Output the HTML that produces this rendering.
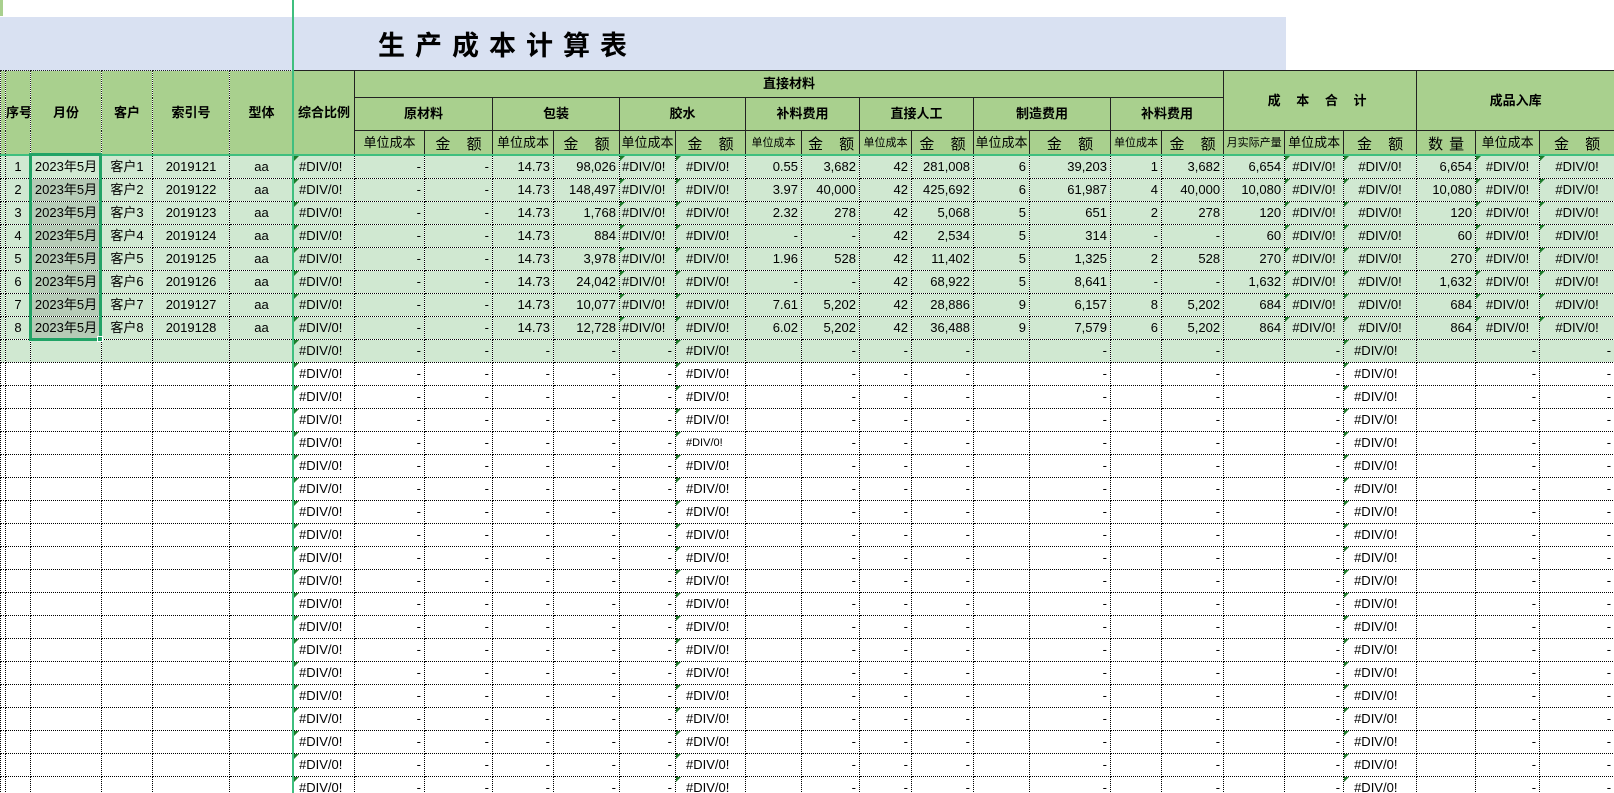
<!DOCTYPE html>
<html><head><meta charset="utf-8">
<style>
*{margin:0;padding:0;box-sizing:border-box}
html{width:1614px;height:793px;overflow:hidden}
body{width:1614px;height:793px;overflow:hidden;background:#fff;position:relative;font-family:"Liberation Sans","Noto Sans CJK SC",sans-serif;font-size:13px;color:#000}
#wrap{position:absolute;left:0;top:0;width:1614px;height:793px;overflow:hidden}
#mark{position:absolute;left:0;top:0;width:3px;height:16px;background:#a9d08e}
#band{position:absolute;left:0;top:17px;width:1286px;height:54px;background:#d9e1f2}
#title{position:absolute;left:378px;top:24px;font-size:27px;font-weight:bold;letter-spacing:10px;line-height:40px;font-family:"Noto Sans CJK SC","WenQuanYi Zen Hei",sans-serif}
table{position:absolute;left:0;top:70px;width:1614px;border-collapse:collapse;table-layout:fixed}
td{border:1px dotted #000;height:23px;text-align:right;padding:0 3px;white-space:nowrap;overflow:hidden;line-height:20px;position:relative}
thead td{background:#a9d08e;text-align:center;padding:0;border:1px solid #222;font-size:13px}
thead td.d{border-style:dotted}
thead td.b{font-weight:bold}
thead .sm{font-size:11px}
thead .je{font-size:15px;letter-spacing:6px;padding-left:6px;padding-top:4px}
tr.g td{background:#d0e8d1}
td.c{text-align:center}
td.l{text-align:left;padding-left:10px}
td.l5{text-align:left;padding-left:5px}
td.l2{text-align:left;padding-left:2px}
td.s{background:#b6cbb6!important}
td.t::before{content:"";position:absolute;left:0;top:0;border-top:5px solid #1e7b2a;border-right:5px solid transparent}
#vline{position:absolute;left:292px;top:0;width:2px;height:793px;background:#3fbf7f}
#hline{position:absolute;left:0;top:154px;width:1614px;height:2px;background:#3fbf7f}
#sel{position:absolute;left:29px;top:153px;width:73px;height:188px;border:3px solid #21a366}
#hd{position:absolute;left:97px;top:336px;width:6px;height:6px;background:#21a366;border:1px solid #fff}
</style></head><body><div id="wrap">
<div id="mark"></div>
<div id="band"></div>
<div id="title">生产成本计算表</div>
<table>
<colgroup><col style="width:5px"><col style="width:25px"><col style="width:71px"><col style="width:51px"><col style="width:77px"><col style="width:64px"><col style="width:61px"><col style="width:70px"><col style="width:68px"><col style="width:61px"><col style="width:66px"><col style="width:56px"><col style="width:70px"><col style="width:56px"><col style="width:58px"><col style="width:52px"><col style="width:62px"><col style="width:56px"><col style="width:81px"><col style="width:51px"><col style="width:62px"><col style="width:61px"><col style="width:59px"><col style="width:73px"><col style="width:59px"><col style="width:64px"><col style="width:75px"></colgroup>
<thead>
<tr style="height:27px"><td class="d" rowspan="3"></td><td class="d b" rowspan="3">序号</td><td class="d b" rowspan="3">月份</td><td class="d b" rowspan="3">客户</td><td class="d b" rowspan="3">索引号</td><td class="d b" rowspan="3">型体</td><td class="b" rowspan="3">综合比例</td><td class="b" colspan="14">直接材料</td><td class="b" colspan="3" rowspan="2" style="letter-spacing:6px">成 本 合 计</td><td class="b" colspan="3" rowspan="2">成品入库</td></tr>
<tr style="height:33px"><td class="b" colspan="2">原材料</td><td class="b" colspan="2">包装</td><td class="b" colspan="2">胶水</td><td class="b" colspan="2">补料费用</td><td class="b" colspan="2">直接人工</td><td class="b" colspan="2">制造费用</td><td class="b" colspan="2">补料费用</td></tr>
<tr style="height:25px"><td>单位成本</td><td class="je">金 额</td><td>单位成本</td><td class="je">金 额</td><td>单位成本</td><td class="je">金 额</td><td class="sm">单位成本</td><td class="je">金 额</td><td class="sm">单位成本</td><td class="je">金 额</td><td>单位成本</td><td class="je">金 额</td><td class="sm">单位成本</td><td class="je">金 额</td><td class="sm">月实际产量</td><td>单位成本</td><td class="je">金 额</td><td class="je">数量</td><td>单位成本</td><td class="je">金 额</td></tr>
</thead>
<tbody>
<tr class="g"><td></td><td class="c">1</td><td class="c" style="background:#d0e8d1">2023年5月</td><td class="c">客户1</td><td class="c">2019121</td><td class="c">aa</td><td class="l5 t">#DIV/0!</td><td>-</td><td>-</td><td>14.73</td><td>98,026</td><td class="l2 t">#DIV/0!</td><td class="l t">#DIV/0!</td><td>0.55</td><td>3,682</td><td>42</td><td>281,008</td><td>6</td><td>39,203</td><td>1</td><td>3,682</td><td>6,654</td><td class="c t">#DIV/0!</td><td class="c t">#DIV/0!</td><td>6,654</td><td class="c t">#DIV/0!</td><td class="c t">#DIV/0!</td></tr>
<tr class="g"><td></td><td class="c">2</td><td class="c s">2023年5月</td><td class="c">客户2</td><td class="c">2019122</td><td class="c">aa</td><td class="l5 t">#DIV/0!</td><td>-</td><td>-</td><td>14.73</td><td>148,497</td><td class="l2 t">#DIV/0!</td><td class="l t">#DIV/0!</td><td>3.97</td><td>40,000</td><td>42</td><td>425,692</td><td>6</td><td>61,987</td><td>4</td><td>40,000</td><td>10,080</td><td class="c t">#DIV/0!</td><td class="c t">#DIV/0!</td><td>10,080</td><td class="c t">#DIV/0!</td><td class="c t">#DIV/0!</td></tr>
<tr class="g"><td></td><td class="c">3</td><td class="c s">2023年5月</td><td class="c">客户3</td><td class="c">2019123</td><td class="c">aa</td><td class="l5 t">#DIV/0!</td><td>-</td><td>-</td><td>14.73</td><td>1,768</td><td class="l2 t">#DIV/0!</td><td class="l t">#DIV/0!</td><td>2.32</td><td>278</td><td>42</td><td>5,068</td><td>5</td><td>651</td><td>2</td><td>278</td><td>120</td><td class="c t">#DIV/0!</td><td class="c t">#DIV/0!</td><td>120</td><td class="c t">#DIV/0!</td><td class="c t">#DIV/0!</td></tr>
<tr class="g"><td></td><td class="c">4</td><td class="c s">2023年5月</td><td class="c">客户4</td><td class="c">2019124</td><td class="c">aa</td><td class="l5 t">#DIV/0!</td><td>-</td><td>-</td><td>14.73</td><td>884</td><td class="l2 t">#DIV/0!</td><td class="l t">#DIV/0!</td><td>-</td><td>-</td><td>42</td><td>2,534</td><td>5</td><td>314</td><td>-</td><td>-</td><td>60</td><td class="c t">#DIV/0!</td><td class="c t">#DIV/0!</td><td>60</td><td class="c t">#DIV/0!</td><td class="c t">#DIV/0!</td></tr>
<tr class="g"><td></td><td class="c">5</td><td class="c s">2023年5月</td><td class="c">客户5</td><td class="c">2019125</td><td class="c">aa</td><td class="l5 t">#DIV/0!</td><td>-</td><td>-</td><td>14.73</td><td>3,978</td><td class="l2 t">#DIV/0!</td><td class="l t">#DIV/0!</td><td>1.96</td><td>528</td><td>42</td><td>11,402</td><td>5</td><td>1,325</td><td>2</td><td>528</td><td>270</td><td class="c t">#DIV/0!</td><td class="c t">#DIV/0!</td><td>270</td><td class="c t">#DIV/0!</td><td class="c t">#DIV/0!</td></tr>
<tr class="g"><td></td><td class="c">6</td><td class="c s">2023年5月</td><td class="c">客户6</td><td class="c">2019126</td><td class="c">aa</td><td class="l5 t">#DIV/0!</td><td>-</td><td>-</td><td>14.73</td><td>24,042</td><td class="l2 t">#DIV/0!</td><td class="l t">#DIV/0!</td><td>-</td><td>-</td><td>42</td><td>68,922</td><td>5</td><td>8,641</td><td>-</td><td>-</td><td>1,632</td><td class="c t">#DIV/0!</td><td class="c t">#DIV/0!</td><td>1,632</td><td class="c t">#DIV/0!</td><td class="c t">#DIV/0!</td></tr>
<tr class="g"><td></td><td class="c">7</td><td class="c s">2023年5月</td><td class="c">客户7</td><td class="c">2019127</td><td class="c">aa</td><td class="l5 t">#DIV/0!</td><td>-</td><td>-</td><td>14.73</td><td>10,077</td><td class="l2 t">#DIV/0!</td><td class="l t">#DIV/0!</td><td>7.61</td><td>5,202</td><td>42</td><td>28,886</td><td>9</td><td>6,157</td><td>8</td><td>5,202</td><td>684</td><td class="c t">#DIV/0!</td><td class="c t">#DIV/0!</td><td>684</td><td class="c t">#DIV/0!</td><td class="c t">#DIV/0!</td></tr>
<tr class="g"><td></td><td class="c">8</td><td class="c s">2023年5月</td><td class="c">客户8</td><td class="c">2019128</td><td class="c">aa</td><td class="l5 t">#DIV/0!</td><td>-</td><td>-</td><td>14.73</td><td>12,728</td><td class="l2 t">#DIV/0!</td><td class="l t">#DIV/0!</td><td>6.02</td><td>5,202</td><td>42</td><td>36,488</td><td>9</td><td>7,579</td><td>6</td><td>5,202</td><td>864</td><td class="c t">#DIV/0!</td><td class="c t">#DIV/0!</td><td>864</td><td class="c t">#DIV/0!</td><td class="c t">#DIV/0!</td></tr>
<tr class="g"><td></td><td></td><td></td><td></td><td></td><td></td><td class="l5 t">#DIV/0!</td><td>-</td><td>-</td><td>-</td><td>-</td><td>-</td><td class="l t">#DIV/0!</td><td></td><td>-</td><td>-</td><td>-</td><td></td><td>-</td><td></td><td>-</td><td></td><td>-</td><td class="l t">#DIV/0!</td><td></td><td>-</td><td>-</td></tr>
<tr><td></td><td></td><td></td><td></td><td></td><td></td><td class="l5 t">#DIV/0!</td><td>-</td><td>-</td><td>-</td><td>-</td><td>-</td><td class="l t">#DIV/0!</td><td></td><td>-</td><td>-</td><td>-</td><td></td><td>-</td><td></td><td>-</td><td></td><td>-</td><td class="l t">#DIV/0!</td><td></td><td>-</td><td>-</td></tr>
<tr><td></td><td></td><td></td><td></td><td></td><td></td><td class="l5 t">#DIV/0!</td><td>-</td><td>-</td><td>-</td><td>-</td><td>-</td><td class="l t">#DIV/0!</td><td></td><td>-</td><td>-</td><td>-</td><td></td><td>-</td><td></td><td>-</td><td></td><td>-</td><td class="l t">#DIV/0!</td><td></td><td>-</td><td>-</td></tr>
<tr><td></td><td></td><td></td><td></td><td></td><td></td><td class="l5 t">#DIV/0!</td><td>-</td><td>-</td><td>-</td><td>-</td><td>-</td><td class="l t">#DIV/0!</td><td></td><td>-</td><td>-</td><td>-</td><td></td><td>-</td><td></td><td>-</td><td></td><td>-</td><td class="l t">#DIV/0!</td><td></td><td>-</td><td>-</td></tr>
<tr><td></td><td></td><td></td><td></td><td></td><td></td><td class="l5 t">#DIV/0!</td><td>-</td><td>-</td><td>-</td><td>-</td><td>-</td><td class="l t" style="font-size:11px">#DIV/0!</td><td></td><td>-</td><td>-</td><td>-</td><td></td><td>-</td><td></td><td>-</td><td></td><td>-</td><td class="l t">#DIV/0!</td><td></td><td>-</td><td>-</td></tr>
<tr><td></td><td></td><td></td><td></td><td></td><td></td><td class="l5 t">#DIV/0!</td><td>-</td><td>-</td><td>-</td><td>-</td><td>-</td><td class="l t">#DIV/0!</td><td></td><td>-</td><td>-</td><td>-</td><td></td><td>-</td><td></td><td>-</td><td></td><td>-</td><td class="l t">#DIV/0!</td><td></td><td>-</td><td>-</td></tr>
<tr><td></td><td></td><td></td><td></td><td></td><td></td><td class="l5 t">#DIV/0!</td><td>-</td><td>-</td><td>-</td><td>-</td><td>-</td><td class="l t">#DIV/0!</td><td></td><td>-</td><td>-</td><td>-</td><td></td><td>-</td><td></td><td>-</td><td></td><td>-</td><td class="l t">#DIV/0!</td><td></td><td>-</td><td>-</td></tr>
<tr><td></td><td></td><td></td><td></td><td></td><td></td><td class="l5 t">#DIV/0!</td><td>-</td><td>-</td><td>-</td><td>-</td><td>-</td><td class="l t">#DIV/0!</td><td></td><td>-</td><td>-</td><td>-</td><td></td><td>-</td><td></td><td>-</td><td></td><td>-</td><td class="l t">#DIV/0!</td><td></td><td>-</td><td>-</td></tr>
<tr><td></td><td></td><td></td><td></td><td></td><td></td><td class="l5 t">#DIV/0!</td><td>-</td><td>-</td><td>-</td><td>-</td><td>-</td><td class="l t">#DIV/0!</td><td></td><td>-</td><td>-</td><td>-</td><td></td><td>-</td><td></td><td>-</td><td></td><td>-</td><td class="l t">#DIV/0!</td><td></td><td>-</td><td>-</td></tr>
<tr><td></td><td></td><td></td><td></td><td></td><td></td><td class="l5 t">#DIV/0!</td><td>-</td><td>-</td><td>-</td><td>-</td><td>-</td><td class="l t">#DIV/0!</td><td></td><td>-</td><td>-</td><td>-</td><td></td><td>-</td><td></td><td>-</td><td></td><td>-</td><td class="l t">#DIV/0!</td><td></td><td>-</td><td>-</td></tr>
<tr><td></td><td></td><td></td><td></td><td></td><td></td><td class="l5 t">#DIV/0!</td><td>-</td><td>-</td><td>-</td><td>-</td><td>-</td><td class="l t">#DIV/0!</td><td></td><td>-</td><td>-</td><td>-</td><td></td><td>-</td><td></td><td>-</td><td></td><td>-</td><td class="l t">#DIV/0!</td><td></td><td>-</td><td>-</td></tr>
<tr><td></td><td></td><td></td><td></td><td></td><td></td><td class="l5 t">#DIV/0!</td><td>-</td><td>-</td><td>-</td><td>-</td><td>-</td><td class="l t">#DIV/0!</td><td></td><td>-</td><td>-</td><td>-</td><td></td><td>-</td><td></td><td>-</td><td></td><td>-</td><td class="l t">#DIV/0!</td><td></td><td>-</td><td>-</td></tr>
<tr><td></td><td></td><td></td><td></td><td></td><td></td><td class="l5 t">#DIV/0!</td><td>-</td><td>-</td><td>-</td><td>-</td><td>-</td><td class="l t">#DIV/0!</td><td></td><td>-</td><td>-</td><td>-</td><td></td><td>-</td><td></td><td>-</td><td></td><td>-</td><td class="l t">#DIV/0!</td><td></td><td>-</td><td>-</td></tr>
<tr><td></td><td></td><td></td><td></td><td></td><td></td><td class="l5 t">#DIV/0!</td><td>-</td><td>-</td><td>-</td><td>-</td><td>-</td><td class="l t">#DIV/0!</td><td></td><td>-</td><td>-</td><td>-</td><td></td><td>-</td><td></td><td>-</td><td></td><td>-</td><td class="l t">#DIV/0!</td><td></td><td>-</td><td>-</td></tr>
<tr><td></td><td></td><td></td><td></td><td></td><td></td><td class="l5 t">#DIV/0!</td><td>-</td><td>-</td><td>-</td><td>-</td><td>-</td><td class="l t">#DIV/0!</td><td></td><td>-</td><td>-</td><td>-</td><td></td><td>-</td><td></td><td>-</td><td></td><td>-</td><td class="l t">#DIV/0!</td><td></td><td>-</td><td>-</td></tr>
<tr><td></td><td></td><td></td><td></td><td></td><td></td><td class="l5 t">#DIV/0!</td><td>-</td><td>-</td><td>-</td><td>-</td><td>-</td><td class="l t">#DIV/0!</td><td></td><td>-</td><td>-</td><td>-</td><td></td><td>-</td><td></td><td>-</td><td></td><td>-</td><td class="l t">#DIV/0!</td><td></td><td>-</td><td>-</td></tr>
<tr><td></td><td></td><td></td><td></td><td></td><td></td><td class="l5 t">#DIV/0!</td><td>-</td><td>-</td><td>-</td><td>-</td><td>-</td><td class="l t">#DIV/0!</td><td></td><td>-</td><td>-</td><td>-</td><td></td><td>-</td><td></td><td>-</td><td></td><td>-</td><td class="l t">#DIV/0!</td><td></td><td>-</td><td>-</td></tr>
<tr><td></td><td></td><td></td><td></td><td></td><td></td><td class="l5 t">#DIV/0!</td><td>-</td><td>-</td><td>-</td><td>-</td><td>-</td><td class="l t">#DIV/0!</td><td></td><td>-</td><td>-</td><td>-</td><td></td><td>-</td><td></td><td>-</td><td></td><td>-</td><td class="l t">#DIV/0!</td><td></td><td>-</td><td>-</td></tr>
<tr><td></td><td></td><td></td><td></td><td></td><td></td><td class="l5 t">#DIV/0!</td><td>-</td><td>-</td><td>-</td><td>-</td><td>-</td><td class="l t">#DIV/0!</td><td></td><td>-</td><td>-</td><td>-</td><td></td><td>-</td><td></td><td>-</td><td></td><td>-</td><td class="l t">#DIV/0!</td><td></td><td>-</td><td>-</td></tr>
<tr><td></td><td></td><td></td><td></td><td></td><td></td><td class="l5 t">#DIV/0!</td><td>-</td><td>-</td><td>-</td><td>-</td><td>-</td><td class="l t">#DIV/0!</td><td></td><td>-</td><td>-</td><td>-</td><td></td><td>-</td><td></td><td>-</td><td></td><td>-</td><td class="l t">#DIV/0!</td><td></td><td>-</td><td>-</td></tr>
</tbody>
</table>
<div id="vline"></div>
<div id="hline"></div>
<div id="sel"></div>
<div id="hd"></div>
</div></body></html>
